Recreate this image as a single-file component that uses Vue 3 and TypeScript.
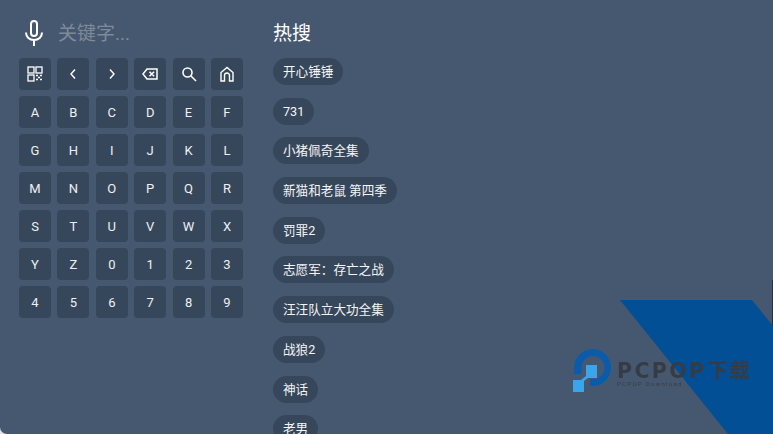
<script setup lang="ts">
const keys: string[] = 'ABCDEFGHIJKLMNOPQRSTUVWXYZ0123456789'.split('')
const hot: string[] = ['开心锤锤', '731', '小猪佩奇全集', '新猫和老鼠 第四季', '罚罪2', '志愿军：存亡之战', '汪汪队立大功全集', '战狼2', '神话', '老男']
</script>

<template>
  <div class="screen">
    <div class="left">
      <div class="search">
        <svg class="mic" width="24" height="28" viewBox="0 0 24 28" fill="none" stroke="#fff" stroke-width="2">
          <rect x="9" y="2" width="6" height="15" rx="3" />
          <path d="M4 13.5c0 4.600 3.500 7.500 8 7.500s8-2.900 8-7.500M12 21v6" />
        </svg>
        <span class="placeholder">关键字...</span>
      </div>
      <div class="grid">
        <div class="key">
          <svg width="16" height="16" viewBox="0 0 16 16" fill="none" stroke="#fff" stroke-width="1.300">
            <rect x="1" y="1" width="6" height="6" /><rect x="9" y="1" width="6" height="6" /><rect x="1" y="9" width="6" height="6" />
            <path d="M9 9.500h2M13 9.500h2M11 11.500h2M9 13.500h2M13 13.500h2" stroke-width="1.500" />
          </svg>
        </div>
        <div class="key"><svg width="16" height="16" viewBox="0 0 16 16" fill="none" stroke="#fff" stroke-width="1.400"><path d="M10 3.500l-4 4.500 4 4.500" /></svg></div>
        <div class="key"><svg width="16" height="16" viewBox="0 0 16 16" fill="none" stroke="#fff" stroke-width="1.400"><path d="M6 3.500l4 4.500-4 4.500" /></svg></div>
        <div class="key"><svg width="16" height="14" viewBox="0 0 16 14" fill="none" stroke="#fff" stroke-width="1.500"><path d="M15 2H5L1 7l4 5h10zM7.500 4.700l4.600 4.600M12.100 4.700L7.500 9.300" /></svg></div>
        <div class="key"><svg width="16" height="16" viewBox="0 0 16 16" fill="none" stroke="#fff" stroke-width="1.600"><circle cx="6.500" cy="6.500" r="4.500" /><path d="M10 10l5 5" /></svg></div>
        <div class="key"><svg width="16" height="16" viewBox="0 0 16 16" fill="none" stroke="#fff" stroke-width="1.400"><path d="M2 15V6.500L8 1.500l6 5V15h-3.500V9.500a2.500 2.500 0 0 0-5 0V15z" /></svg></div>
        <div v-for="k in keys" :key="k" class="key">{{ k }}</div>
      </div>
    </div>
    <div class="right">
      <div class="title">热搜</div>
      <div class="list">
        <div v-for="h in hot" :key="h" class="chip">{{ h }}</div>
      </div>
    </div>

    <div class="edge"></div>
    <div class="wedge"></div>
    <div class="logo">
      <svg class="logo-mark" width="40" height="44" viewBox="0 0 40 44">
        <path d="M1 25V18.500a18.500 18.500 0 1 1 19 18.500h-3v-7h3a11.500 11.500 0 1 0-11.500-11.500V25z" fill="#0a5cab" />
        <path d="M13 16h11v13H15l-4 3v11H0V31h8l5-4z" fill="#3aa5ea" />
      </svg>
      <div class="logo-text">
        <div class="logo-main">PCPOP<span class="logo-cn">下载</span></div>
        <div class="logo-sub">PCPOP Download</div>
      </div>
    </div>
  </div>
</template>

<style scoped>
.screen {
  position: relative;
  width: 773px;
  height: 434px;
  overflow: hidden;
  display: flex;
  background: #46586f;
  border-bottom-left-radius: 7px;
  font-family: Roboto, "Noto Sans CJK SC", sans-serif;
  color: #fff;
}
.left {
  width: 273px;
  flex: none;
  box-sizing: border-box;
  padding: 15px 0 0 19px;
}
.search {
  display: flex;
  align-items: center;
  height: 36px;
  margin-bottom: 7px;
  padding-left: 3px;
}
.placeholder {
  margin: 0 0 4px 12px;
  font-size: 19px;
  color: #7e8a99;
}
.grid {
  display: grid;
  grid-template-columns: repeat(6, 32px);
  grid-auto-rows: 32px;
  column-gap: 6.400px;
  row-gap: 6px;
}
.key {
  display: flex;
  align-items: center;
  justify-content: center;
  background: #37475b;
  border-radius: 4px;
  font-size: 13px;
  color: #eef0f2;
}
.right {
  flex: 1;
  padding-top: 22px;
}
.title {
  height: 23px;
  margin-bottom: 13px;
  font-size: 19px;
  line-height: 23px;
}
.list {
  display: flex;
  flex-direction: column;
  align-items: flex-start;
  gap: 12.700px;
}
.chip {
  box-sizing: border-box;
  height: 27px;
  padding: 0 10px;
  border-radius: 14px;
  background: #37475b;
  font-size: 12.600px;
  line-height: 27px;
  white-space: nowrap;
  color: #f4f5f6;
}
.edge {
  position: absolute;
  left: 772px;
  top: 280px;
  width: 1px;
  height: 46px;
  background: #2a2d33;
}
.wedge {
  position: absolute;
  left: 620px;
  top: 300px;
  width: 153px;
  height: 134px;
  background: #024f96;
  clip-path: polygon(0 0, 132px 0, 153px 26px, 153px 134px, 108px 134px);
}
.logo {
  position: absolute;
  left: 573px;
  top: 349px;
  display: flex;
  filter: blur(0.400px);
}
.logo-text {
  margin: 8px 0 0 4px;
}
.logo-main {
  font-family: "DejaVu Sans", "Noto Sans CJK SC", sans-serif;
  font-size: 20.500px;
  line-height: 24px;
  font-weight: 700;
  letter-spacing: 2.400px;
  color: #363c46;
  white-space: nowrap;
}
.logo-cn {
  font-family: "Noto Sans CJK SC", sans-serif;
  letter-spacing: 1px;
  margin-left: 1px;
}
.logo-sub {
  margin-top: -3px;
  font-size: 6px;
  line-height: 8px;
  color: #363c46;
  letter-spacing: 1.300px;
  white-space: nowrap;
}
</style>

<style>
html, body { background: #dfe2e6; }
</style>
